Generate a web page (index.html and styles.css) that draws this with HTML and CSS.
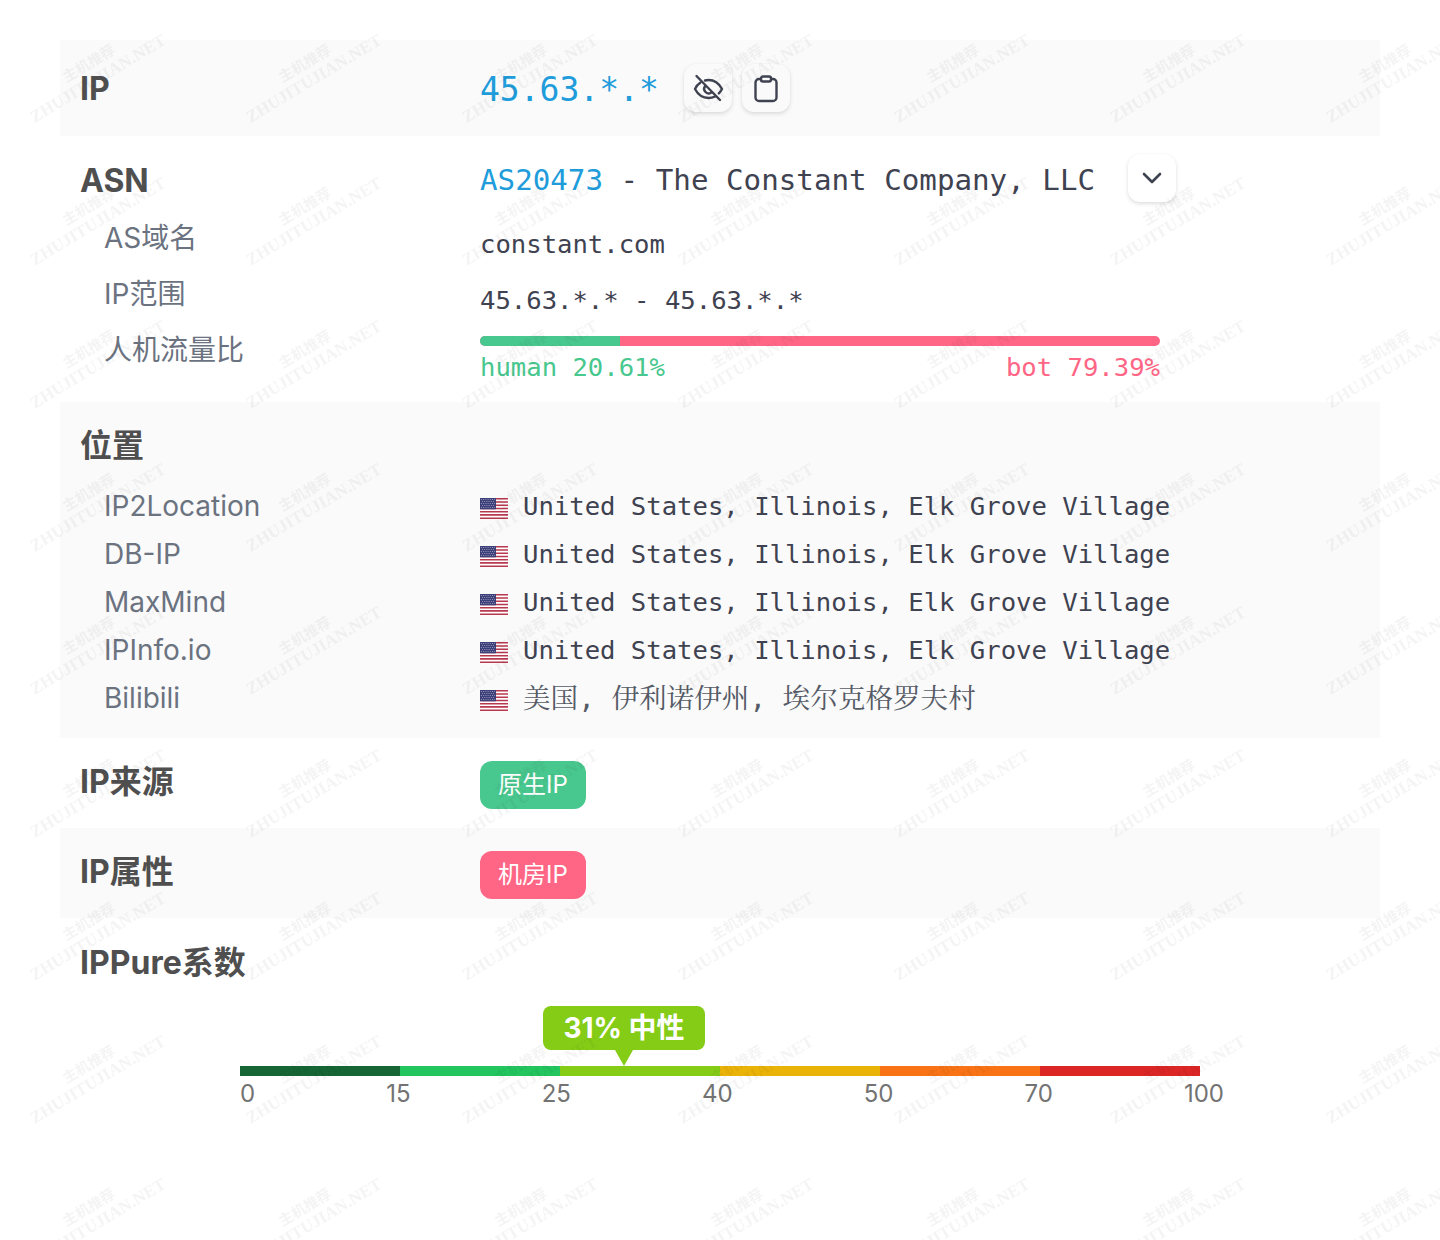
FILE: index.html
```html
<!DOCTYPE html>
<html lang="zh-CN">
<head>
<meta charset="utf-8">
<title>IP</title>
<link rel="stylesheet" href="styles.css">
</head>
<body>
<main class="table">
  <section class="row shaded ip-row">
    <h2 class="label">IP</h2>
    <div class="value ip-value">
      <span class="ip-text">45.63.*.*</span>
      <button class="icon-btn gray" aria-label="hide">
        <svg viewBox="0 0 32 32" width="32" height="32" fill="none" stroke="#3f4250" stroke-width="2.400" stroke-linecap="round" stroke-linejoin="round"><path d="M8.500 10.500C6.200 12 4.300 14.200 3 17c3.200 6 7.700 9 13.500 9 2.400 0 4.600-.5 6.500-1.500M13 8.500c1.100-.3 2.300-.5 3.500-.5 5.800 0 10.300 3 13.500 9-.9 1.700-2 3.200-3.200 4.400"/><path d="M13.200 14a4.500 4.500 0 0 0 5.800 6.700"/><path d="M4.500 4 28 28"/></svg>
      </button>
      <button class="icon-btn gray" aria-label="copy">
        <svg viewBox="0 0 32 32" width="32" height="32" fill="none" stroke="#3f4250" stroke-width="2.400" stroke-linecap="round" stroke-linejoin="round"><path d="M11 7H9a3.500 3.500 0 0 0-3.500 3.500v15A3.500 3.500 0 0 0 9 29h14a3.500 3.500 0 0 0 3.500-3.500v-15A3.500 3.500 0 0 0 23 7h-2"/><rect x="11" y="4.500" width="10" height="5" rx="2"/></svg>
      </button>
    </div>
  </section>

  <section class="asn">
    <div class="row asn-head">
      <h2 class="label">ASN</h2>
      <div class="value asn-value">
        <span class="mono-l"><span class="link">AS20473</span> - The Constant Company, LLC</span>
        <button class="icon-btn" aria-label="expand">
          <svg viewBox="0 0 32 32" width="32" height="32" fill="none" stroke="#3f4250" stroke-width="2.600" stroke-linecap="round" stroke-linejoin="round"><path d="M8 12l8 8 8-8"/></svg>
        </button>
      </div>
    </div>
    <div class="sub s56"><span class="sub-label">AS域名</span><span class="mono low">constant.com</span></div>
    <div class="sub s56"><span class="sub-label">IP范围</span><span class="mono low">45.63.*.* - 45.63.*.*</span></div>
    <div class="sub traffic">
      <span class="sub-label">人机流量比</span>
      <div class="traffic-box">
        <div class="bar"><span class="bar-human"></span></div>
        <div class="bar-legend mono"><span class="human">human 20.61%</span><span class="bot">bot 79.39%</span></div>
      </div>
    </div>
  </section>

  <section class="shaded location">
    <h2 class="label loc-title">位置</h2>
    <div class="sub s48"><span class="sub-label">IP2Location</span><span class="place"><svg class="flag" viewBox="0 0 28 21"><use href="#us"/></svg><span class="mono nudge">United States, Illinois, Elk Grove Village</span></span></div>
    <div class="sub s48"><span class="sub-label">DB-IP</span><span class="place"><svg class="flag" viewBox="0 0 28 21"><use href="#us"/></svg><span class="mono nudge">United States, Illinois, Elk Grove Village</span></span></div>
    <div class="sub s48"><span class="sub-label">MaxMind</span><span class="place"><svg class="flag" viewBox="0 0 28 21"><use href="#us"/></svg><span class="mono nudge">United States, Illinois, Elk Grove Village</span></span></div>
    <div class="sub s48"><span class="sub-label">IPInfo.io</span><span class="place"><svg class="flag" viewBox="0 0 28 21"><use href="#us"/></svg><span class="mono nudge">United States, Illinois, Elk Grove Village</span></span></div>
    <div class="sub s48"><span class="sub-label">Bilibili</span><span class="place"><svg class="flag" viewBox="0 0 28 21"><use href="#us"/></svg><span class="mono cjk">美国, 伊利诺伊州, 埃尔克格罗夫村</span></span></div>
  </section>

  <section class="row tag-row">
    <h2 class="label">IP来源</h2>
    <div class="value"><span class="tag green">原生IP</span></div>
  </section>
  <section class="row tag-row shaded">
    <h2 class="label">IP属性</h2>
    <div class="value"><span class="tag red">机房IP</span></div>
  </section>

  <section class="pure">
    <h2 class="label pure-title">IPPure系数</h2>
    <div class="gauge">
      <div class="gauge-bar">
        <div class="marker"><span class="marker-text">31% 中性</span></div>
        <i class="seg s1"></i><i class="seg s2"></i><i class="seg s3"></i><i class="seg s4"></i><i class="seg s5"></i><i class="seg s6"></i>
      </div>
      <div class="ticks"><span>0</span><span>15</span><span>25</span><span>40</span><span>50</span><span>70</span><span>100</span></div>
    </div>
  </section>
</main>

<svg class="defs" width="0" height="0" aria-hidden="true">
  <defs>
    <g id="us">
      <rect width="28" height="21" fill="#fff"/>
      <path d="M0 0h28v1.600H0zM0 3.200h28v1.600H0zM0 6.400h28v1.600H0zM0 9.700h28v1.600H0zM0 12.900h28v1.600H0zM0 16.100h28v1.600H0zM0 19.400h28V21H0z" fill="#b8384f"/>
      <rect width="16" height="11.300" fill="#3c3f78"/>
      <path d="M1 1.500h14M2 3.500h12M1 5.500h14M2 7.500h12M1 9.500h14" stroke="#a9abc9" stroke-width=".8" stroke-dasharray="1 1.200" fill="none"/>
    </g>
  </defs>
</svg>

<svg class="watermark" width="1440" height="1240" aria-hidden="true">
  <defs>
    <pattern id="wm" x="-14" y="1" width="216" height="143" patternUnits="userSpaceOnUse">
      <g transform="rotate(-31 108 71)" class="wm-text">
        <text x="108" y="66" text-anchor="middle" class="wm-cn">主机推荐</text>
        <text x="108" y="84" text-anchor="middle">ZHUJITUJIAN.NET</text>
      </g>
    </pattern>
  </defs>
  <rect width="1440" height="1240" fill="url(#wm)"/>
</svg>
</body>
</html>
```

FILE: styles.css
```css
* { box-sizing: border-box; }
html, body { margin: 0; padding: 0; }
body {
  background: #fff;
  color: #4f4f4f;
  font-family: Inter, "Noto Sans CJK SC", sans-serif;
  height: 1240px;
  overflow: hidden;
  position: relative;
}
.table { padding: 40px 60px 0; }
.shaded { background: #fafafa; }
.row { display: flex; padding: 0 20px; }
.label {
  margin: 0;
  font-size: 32px;
  line-height: 42px;
  font-weight: 700;
  color: #4f4f4f;
  width: 400px;
  flex: none;
}
.value { display: flex; align-items: center; }
.ip-row { height: 96px; padding-top: 28px; }
.ip-value { align-items: flex-start; margin-top: -4px; }
.ip-text {
  font-family: "DejaVu Sans Mono", monospace;
  font-size: 33px;
  line-height: 52px;
  color: #209cdb;
  width: 204px;
}
.icon-btn {
  width: 48px;
  height: 48px;
  border: 0;
  padding: 0;
  margin-right: 10px;
  border-radius: 12px;
  background: #fff;
  box-shadow: 0 2px 4px rgba(0, 0, 0, .12), 0 0 2px rgba(0, 0, 0, .04);
  display: flex;
  align-items: center;
  justify-content: center;
}
.icon-btn.gray { background: #fafafa; }
.asn { display: flex; flex-direction: column; }
.asn-head { height: 72px; padding-top: 24px; }
.asn-value { align-items: flex-start; margin-top: -6px; }
.mono-l {
  font-family: "DejaVu Sans Mono", monospace;
  font-size: 29.200px;
  line-height: 52px;
  color: #3f4250;
  white-space: pre;
}
.link { color: #209cdb; }
.asn-value .icon-btn { margin: 0 0 0 33px; }
.mono {
  font-family: "DejaVu Sans Mono", "Noto Sans CJK SC", monospace;
  font-size: 25.600px;
  color: #3f4250;
  white-space: pre;
}
.low { padding-top: 16px; }
.nudge { padding-top: 2px; }
.sub { display: flex; align-items: center; padding-left: 20px; }
.sub-label {
  width: 400px;
  flex: none;
  padding-left: 24px;
  font-size: 28px;
  color: #6b7280;
}
.s56 { height: 56px; }
.s48 { height: 48px; }
.s48 .sub-label { padding-top: 2px; }
.traffic { height: 82px; align-items: flex-start; padding-top: 0; }
.traffic .sub-label { line-height: 60px; }
.traffic-box { width: 680px; padding-top: 16px; }
.bar { height: 10px; border-radius: 5px; background: #ff6685; overflow: hidden; }
.bar-human { display: block; height: 100%; width: 20.61%; background: #48c78e; }
.bar-legend { display: flex; justify-content: space-between; line-height: 42px; }
.human { color: #48c78e; }
.bot { color: #ff6685; }
.location { height: 336px; padding-top: 23px; }
.loc-title { padding-left: 20px; margin-bottom: 14px; width: auto; }
.place { display: flex; align-items: center; }
.flag { width: 28px; height: 21px; margin: 6px 15px 0 0; flex: none; }
.cjk { font-family: "DejaVu Sans Mono", "Noto Serif CJK SC", serif; font-size: 27.600px; color: #555a66; margin-top: -3px; }
.tag-row { height: 90px; padding-top: 23px; }
.tag {
  display: flex;
  align-items: center;
  justify-content: center;
  width: 106px;
  height: 48px;
  padding-bottom: 6px;
  border-radius: 12px;
  color: #fff;
  font-size: 24px;
}
.tag-row .value { align-items: flex-start; }
.green { background: #48c78e; }
.red { background: #ff6685; }
.pure { padding: 24px 20px 0; }
.gauge { width: 984px; margin: 82px 0 0 160px; }
.gauge-bar { width: 960px; height: 10px; display: flex; position: relative; }
.seg { flex: 1; display: block; }
.s1 { background: #166534; }
.s2 { background: #22c55e; }
.s3 { background: #84cc16; }
.s4 { background: #eab308; }
.s5 { background: #f97316; }
.s6 { background: #dc2626; }
.marker {
  position: absolute;
  left: 40%;
  bottom: 26px;
  transform: translateX(-50%);
  width: 162px;
  height: 44px;
  padding-bottom: 4px;
  border-radius: 8px;
  background: #84cc16;
  color: #fff;
  font-size: 28px;
  font-weight: 700;
  display: flex;
  align-items: center;
  justify-content: center;
}
.marker::after {
  content: "";
  position: absolute;
  left: 50%;
  top: 100%;
  margin-left: -9px;
  border: 9px solid transparent;
  border-top: 16px solid #84cc16;
  border-bottom: 0;
}
.ticks {
  display: flex;
  justify-content: space-between;
  font-size: 24px;
  line-height: 34px;
  color: #737373;
  margin-top: 1px;
}
.defs { position: absolute; }
.watermark { position: absolute; left: 0; top: 0; pointer-events: none; }
.wm-text { fill: rgba(0, 0, 0, .045); font-family: "Liberation Serif", "Noto Sans CJK SC", serif; font-size: 17px; font-weight: 700; }
.wm-cn { font-size: 14.500px; }
```
